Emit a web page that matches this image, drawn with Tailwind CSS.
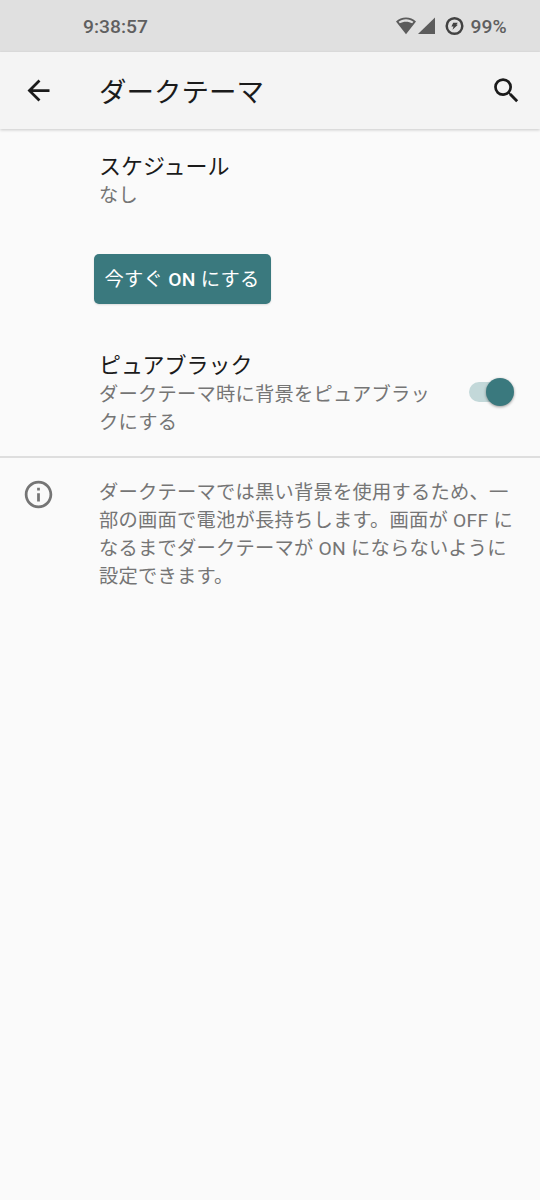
<!DOCTYPE html>
<html lang="ja">
<head>
<meta charset="utf-8">
<title>ダークテーマ</title>
<script src="https://cdn.jsdelivr.net/npm/@tailwindcss/browser@4"></script>
</head>
<body class="bg-[#fafafa]">
<div class="flex h-[1200px] w-[540px] flex-col overflow-hidden bg-[#fafafa] font-['Roboto','Noto_Sans_CJK_JP',sans-serif] text-[#1b1b1b]">
  <div class="flex h-[52px] shrink-0 items-center bg-[#e0e0e0] pl-[83px] pt-[2px] text-[19.25px] font-medium text-[#5f5f5f]">
    <span class="flex-1 whitespace-nowrap">9:38:57</span>
    <svg class="-mt-[2px] h-[18px] w-[20px]" viewBox="0 0 20 18"><path fill="#5c5c5c" fill-rule="evenodd" d="M10 .5C6.100.500 2.700 2 0 4.400L10 17.300 20 4.400C17.300 2 13.900.500 10 .500ZM2.600 4.700C4.600 3.200 7.100 2.300 10 2.300s5.400.900 7.400 2.400l-1.200 1.600C14.400 5.200 12.300 4.700 10 4.700s-4.400.500-6.200 1.600Z"/></svg>
    <svg class="-mt-[2px] ml-[2px] h-[18px] w-[18px]" viewBox="0 0 18 18"><path fill="#5c5c5c" d="M17 .500V17H0Z"/></svg>
    <svg class="-mt-[2px] ml-[9.500px] h-[20px] w-[20px]" viewBox="0 0 20 20"><circle cx="9.500" cy="10" r="7.800" fill="none" stroke="#424242" stroke-width="2.500"/><path fill="#424242" d="M8.200 6.700h4.600l-1.400 2h1.500L7.500 13.800l1-3.200H6.400Z"/></svg>
    <span class="ml-[5.500px] w-[69.500px]">99%</span>
  </div>
  <header class="z-10 flex h-[77px] shrink-0 items-center bg-[#f4f4f4] pl-[22px] shadow-[0_1px_3px_rgba(0,0,0,0.2)]">
    <svg class="h-[33px] w-[33px]" viewBox="0 0 24 24"><path fill="#1b1b1b" d="M20 11H7.830l5.590-5.590L12 4l-8 8 8 8 1.410-1.410L7.830 13H20z"/></svg>
    <h1 class="ml-[44px] flex-1 pt-[4px] text-[27.5px] leading-[40px]">ダークテーマ</h1>
    <svg class="mr-[17px] h-[33px] w-[33px]" viewBox="0 0 24 24"><path fill="#1b1b1b" d="M15.500 14h-.790l-.280-.270A6.471 6.471 0 0 0 16 9.500 6.500 6.500 0 1 0 9.500 16c1.610 0 3.090-.590 4.230-1.570l.270.280v.790l5 4.990L20.490 19l-4.990-5zm-6 0C7.010 14 5 11.990 5 9.500S7.010 5 9.500 5 14 7.010 14 9.500 11.990 14 9.500 14z"/></svg>
  </header>
  <main>
    <section class="pl-[99px] pt-[23px]">
      <h2 class="text-[22px] leading-[30px]">スケジュール</h2>
      <p class="text-[19.25px] leading-[28px] tracking-[0.25px] text-[#757575]">なし</p>
    </section>
    <div class="pl-[93.500px] pt-[43.500px]">
      <button class="flex h-[50px] w-[177px] items-center justify-center rounded-[5px] bg-[#3a797e] pt-[3px] text-[19.25px] tracking-[0.3px] whitespace-nowrap text-white shadow-[0_1px_2px_rgba(0,0,0,0.12)]"><span>今すぐ <span class="font-medium">ON</span> にする</span></button>
    </div>
    <section class="flex h-[154.500px] items-start border-b-2 border-[#dedede] pl-[99px] pt-[47.500px]">
      <div class="w-[336px]">
        <h2 class="text-[22px] leading-[30px]">ピュアブラック</h2>
        <p class="text-[19.25px] leading-[28px] tracking-[0.25px] text-[#757575]">ダークテーマ時に背景をピュアブラッ<br>クにする</p>
      </div>
      <div class="ml-[34px] mt-[27px] flex h-[28px] w-[45px] items-center">
        <div class="h-[20px] w-[30px] rounded-full bg-[#c3d8d9]"></div>
        <div class="-ml-[13.500px] h-[28px] w-[28px] shrink-0 rounded-full bg-[#3a797e] shadow-[0_1px_3px_rgba(0,0,0,0.4)]"></div>
      </div>
    </section>
    <section class="flex pl-[22px] pt-[20px]">
      <svg class="h-[33px] w-[33px]" viewBox="0 0 24 24"><path fill="#757575" d="M11 7h2v2h-2zm0 4h2v6h-2zm1-9C6.480 2 2 6.480 2 12s4.480 10 10 10 10-4.480 10-10S17.520 2 12 2zm0 18c-4.410 0-8-3.590-8-8s3.590-8 8-8 8 3.590 8 8-3.590 8-8 8z"/></svg>
      <p class="ml-[44px] pt-[1px] text-[19.25px] leading-[28px] tracking-[0.25px] whitespace-nowrap text-[#757575]">ダークテーマでは黒い背景を使用するため、一<br>部の画面で電池が長持ちします。画面が OFF に<br>なるまでダークテーマが ON にならないように<br>設定できます。</p>
    </section>
  </main>
</div>
</body>
</html>
